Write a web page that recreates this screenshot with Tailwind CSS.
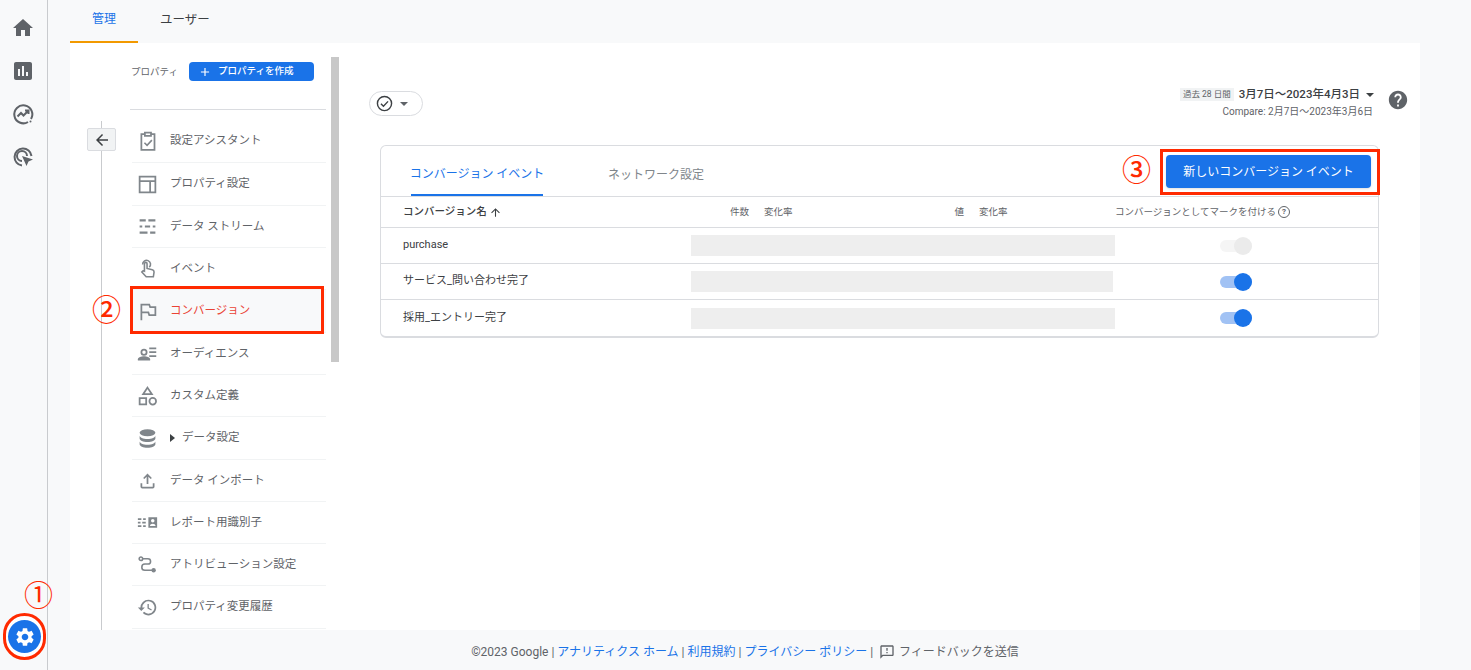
<!DOCTYPE html>
<html lang="ja">
<head>
  <meta charset="UTF-8">
  <title>管理 - コンバージョン</title>
  <script src="https://cdn.jsdelivr.net/npm/@tailwindcss/browser@4"></script>
</head>
<body class="bg-[#f8f9fa] font-['Roboto','Noto_Sans_CJK_JP',sans-serif] text-[#5f6368]">
<div class="relative flex h-[670px] w-[1471px] overflow-hidden">

  <!-- rail -->
  <div class="flex w-[48px] shrink-0 flex-col items-center border-r border-[#c9cbce] pr-px pt-[16px] text-[#5f6368]">
    <svg class="mb-[19px] h-[24px] w-[24px]" viewBox="0 0 24 24" fill="currentColor"><path d="M10 20v-6h4v6h5v-8h3L12 3 2 12h3v8z"/></svg>
    <svg class="mb-[19px] h-[24px] w-[24px]" viewBox="0 0 24 24" fill="currentColor"><path d="M19 3H5c-1.1 0-2 .9-2 2v14c0 1.1.9 2 2 2h14c1.1 0 2-.9 2-2V5c0-1.1-.9-2-2-2zM9 17H7v-7h2v7zm4 0h-2V7h2v10zm4 0h-2v-4h2v4z"/></svg>
    <svg class="mb-[19px] h-[24px] w-[24px]" viewBox="0 0 24 24" fill="none" stroke="currentColor" stroke-width="2"><path d="M20 17a9 9 0 1 0-3 3"/><path d="M6.5 14.5l3.5-3.5 2.5 2.5 4.5-4.5M14 8.500h3.500V12"/><circle cx="19.500" cy="19.500" r="1" fill="currentColor" stroke="none"/></svg>
    <svg class="h-[24px] w-[24px]" viewBox="0 0 24 24" fill="none" stroke="currentColor" stroke-width="2"><path d="M11 20.500a8.500 8.500 0 1 1 9.500-9.500"/><path d="M11 16a5 5 0 1 1 5-5"/><path d="M11 11l11 3.500-4.500 2 -2 4.500z" fill="currentColor" stroke="none"/></svg>
  </div>

  <!-- main -->
  <div class="flex min-w-0 flex-1 flex-col pl-[22px] pr-[51px]">
    <div class="flex h-[43px] shrink-0 text-[12px]">
      <div class="flex h-[43px] w-[68px] items-center justify-center border-b-2 border-[#f29900] pb-[3px] text-[#1a73e8]">管理</div>
      <div class="flex h-[43px] w-[94px] items-center justify-center pb-[3px] text-[12.500px] text-[#3c4043]">ユーザー</div>
    </div>

    <div class="flex min-h-0 flex-1 bg-white">
      <!-- side column -->
      <div class="flex w-[270px] shrink-0">
        <div class="relative w-[60px] shrink-0">
          <div class="absolute bottom-0 left-[31px] top-[78px] w-px bg-[#c9cbce]"></div>
          <div class="absolute left-[17px] top-[85px] flex h-[23px] w-[29px] items-center justify-center rounded-[2px] border border-[#dadce0] bg-[#f1f3f4] text-[#3c4043]">
            <svg class="h-[18px] w-[18px]" viewBox="0 0 24 24" fill="currentColor"><path d="M20 11H7.830l5.590-5.590L12 4l-8 8 8 8 1.410-1.410L7.830 13H20z"/></svg>
          </div>
        </div>
        <div class="w-[196px] shrink-0">
          <div class="flex h-[67px] items-start border-b border-[#dadce0] pl-[1px] pt-[19px]">
            <span class="mt-[3px] w-[58px] text-[9.500px] text-[#5f6368]">プロパティ</span>
            <div class="flex h-[19px] w-[125px] items-center rounded-[4px] bg-[#1a73e8] pl-[9px] text-[9.500px] font-medium text-white">
              <svg class="mr-[6px] h-[14px] w-[14px]" viewBox="0 0 24 24" fill="currentColor"><path d="M19 13h-6v6h-2v-6H5v-2h6V5h2v6h6z"/></svg>プロパティを作成
            </div>
          </div>
          <div class="pl-[2px] text-[11.500px] text-[#5f6368]">
            <div class="flex h-[53px] items-center border-b border-[#f1f3f4] pt-[9px]">
              <svg class="ml-[5px] mr-[12px] h-[22px] w-[21px] text-[#80868b]" viewBox="0 0 24 24" fill="none" stroke="currentColor" stroke-width="2"><path d="M9 4H5v18h15V4h-4M9 2.500h7V6H9z"/><path d="M8.500 14l3 3 5.500-6" stroke-width="1.800"/></svg>
              設定アシスタント
            </div>
            <div class="flex h-[43px] items-center border-b border-[#f1f3f4]">
              <svg class="ml-[5px] mr-[12px] h-[21px] w-[21px] text-[#80868b]" viewBox="0 0 24 24" fill="none" stroke="currentColor" stroke-width="2"><path d="M3 3h18v18H3zM3 8h18M15 8v13"/></svg>
              プロパティ設定
            </div>
            <div class="flex h-[42px] items-center border-b border-[#f1f3f4]">
              <svg class="ml-[5px] mr-[12px] h-[21px] w-[21px] text-[#80868b]" viewBox="0 0 24 24" fill="none" stroke="currentColor" stroke-width="2.400"><path d="M3 5h7M13 5h8M3 12h3M9 12h6M18 12h3M3 19h9M15 19h6"/></svg>
              データ ストリーム
            </div>
            <div class="flex h-[42px] items-center border-b border-[#f1f3f4]">
              <svg class="ml-[5px] mr-[12px] h-[21px] w-[21px] text-[#80868b]" viewBox="0 0 24 24" fill="none" stroke="currentColor" stroke-width="1.800"><path d="M6.500 7.500a4.500 4.500 0 1 1 7.500 3"/><path d="M8.500 15V6.500a1.500 1.500 0 0 1 3 0V12l6 1.500c1.500.4 2 1.500 2 2.500l-.8 5.500H10.500L5.500 16c1-1.200 2-1.500 3-1z"/></svg>
              イベント
            </div>
            <div class="flex h-[43px] items-center border-b border-[#f1f3f4] bg-[#f8f9fa] text-[#ea4335]">
              <svg class="ml-[5px] mr-[12px] h-[21px] w-[21px] text-[#80868b]" viewBox="0 0 24 24" fill="none" stroke="currentColor" stroke-width="2"><path d="M5 22V4h9l1 3h6v9h-7l-1-3H5"/></svg>
              コンバージョン
            </div>
            <div class="flex h-[42px] items-center border-b border-[#f1f3f4]">
              <svg class="ml-[5px] mr-[12px] h-[21px] w-[21px] text-[#80868b]" viewBox="0 0 24 24" fill="currentColor"><path d="M14 5h8v2h-8zM14 9.500h8v2h-8zM14 14h8v2h-8z"/><circle cx="8" cy="10.500" r="3" fill="none" stroke="currentColor" stroke-width="2"/><path d="M1 20v-1.500C1 16 5 15 8 15s7 1 7 3.500V20z"/></svg>
              オーディエンス
            </div>
            <div class="flex h-[42px] items-center border-b border-[#f1f3f4]">
              <svg class="ml-[5px] mr-[12px] h-[21px] w-[21px] text-[#80868b]" viewBox="0 0 24 24" fill="none" stroke="currentColor" stroke-width="2"><path d="M12 3l5 7.500H7zM3 15h7.500v7H3z"/><circle cx="18" cy="18.500" r="3.800"/></svg>
              カスタム定義
            </div>
            <div class="flex h-[43px] items-center border-b border-[#f1f3f4]">
              <svg class="ml-[5px] mr-[12px] h-[21px] w-[21px] text-[#80868b]" viewBox="0 0 24 24" fill="currentColor"><ellipse cx="12" cy="5.500" rx="9" ry="4"/><path d="M3 8.500c0 2.200 4 4 9 4s9-1.800 9-4V12c0 2.200-4 4-9 4s-9-1.800-9-4zM3 15c0 2.200 4 4 9 4s9-1.800 9-4v3.500c0 2.200-4 4-9 4s-9-1.800-9-4z"/></svg>
              <span class="mr-[7px] h-0 w-0 border-y-[4px] border-l-[5px] border-y-transparent border-l-[#3c4043]"></span>データ設定
            </div>
            <div class="flex h-[42px] items-center border-b border-[#f1f3f4]">
              <svg class="ml-[5px] mr-[12px] h-[21px] w-[21px] text-[#80868b]" viewBox="0 0 24 24" fill="currentColor"><path d="M11 16V7.800L8.400 10.400 7 9l5-5 5 5-1.400 1.400L13 7.800V16zM4 15h2v4h12v-4h2v4a2 2 0 0 1-2 2H6a2 2 0 0 1-2-2z"/></svg>
              データ インポート
            </div>
            <div class="flex h-[42px] items-center border-b border-[#f1f3f4]">
              <svg class="ml-[5px] mr-[12px] h-[21px] w-[21px] text-[#80868b]" viewBox="0 0 24 24" fill="currentColor"><path d="M1 7h4v2H1zM7 7h3v2H7zM1 11h3v2H1zM6 11h4v2H6zM1 15h4v2H1zM7 15h3v2H7z"/><path fill-rule="evenodd" d="M13 6h10v12H13zM18 8a2 2 0 1 0 0 4 2 2 0 0 0 0-4zm-3.200 8h6.400c0-1.500-1.800-2.500-3.200-2.500s-3.200 1-3.200 2.500z"/></svg>
              レポート用識別子
            </div>
            <div class="flex h-[42px] items-center border-b border-[#f1f3f4]">
              <svg class="ml-[5px] mr-[12px] h-[21px] w-[21px] text-[#80868b]" viewBox="0 0 24 24" fill="none" stroke="currentColor" stroke-width="1.800"><circle cx="4.500" cy="5.500" r="2"/><path d="M6.500 5.500h6a3 3 0 0 1 0 6H9a3 3 0 0 0 0 7h9"/><circle cx="19" cy="18.500" r="2.500" fill="currentColor" stroke="none"/></svg>
              アトリビューション設定
            </div>
            <div class="flex h-[43px] items-center border-b border-[#f1f3f4]">
              <svg class="ml-[5px] mr-[12px] h-[21px] w-[21px] text-[#80868b]" viewBox="0 0 24 24" fill="currentColor"><path d="M13 3a9 9 0 0 0-9 9H1l3.900 3.900L9 12H6a7 7 0 1 1 2.050 4.950L6.640 18.360A9 9 0 1 0 13 3zm-1 5v5l4.300 2.500.7-1.200-3.500-2.100V8z"/></svg>
              プロパティ変更履歴
            </div>
          </div>
        </div>
        <div class="ml-[5px] mt-[14px] h-[305px] w-[8px] shrink-0 bg-[#c8c8c8]"></div>
      </div>

      <!-- content -->
      <div class="min-w-0 flex-1 pl-[40px] pr-[41px]">
        <div class="flex h-[102px] items-start justify-between pl-[-11px]">
          <div class="-ml-[11px] mt-[48px] flex h-[25px] w-[54px] items-center rounded-full border border-[#dadce0] pl-[6px]">
            <svg class="h-[17px] w-[17px] text-[#3c4043]" viewBox="0 0 24 24" fill="none" stroke="currentColor" stroke-width="2"><circle cx="12" cy="12" r="10"/><path d="M7 12.500l3.500 3.500 6.500-7"/></svg>
            <span class="ml-[7px] h-0 w-0 border-x-[4px] border-t-[4px] border-x-transparent border-t-[#5f6368]"></span>
          </div>
          <div class="mr-[-30px] mt-[44px] flex items-start">
            <div class="flex flex-col items-end">
              <div class="flex h-[15px] items-center">
                <span class="mr-[5px] bg-[#f1f3f4] px-[3px] text-[8.500px] leading-[13px] text-[#5f6368]">過去 28 日間</span>
                <span class="text-[11.500px] font-medium text-[#3c4043]">3月7日〜2023年4月3日</span>
                <span class="ml-[6px] mr-[-1px] h-0 w-0 border-x-[4px] border-t-[4px] border-x-transparent border-t-[#3c4043]"></span>
              </div>
              <div class="mr-0 mt-[3px] text-[10px] leading-[14px] text-[#5f6368]">Compare: 2月7日〜2023年3月6日</div>
            </div>
            <svg class="ml-[14px] mt-[2px] h-[22px] w-[22px] text-[#5f6368]" viewBox="0 0 24 24" fill="currentColor"><path d="M12 2C6.480 2 2 6.480 2 12s4.480 10 10 10 10-4.480 10-10S17.520 2 12 2zm1 17h-2v-2h2v2zm2.070-7.750l-.9.920C13.450 12.900 13 13.500 13 15h-2v-.5c0-1.100.45-2.100 1.170-2.830l1.240-1.260c.37-.36.590-.86.590-1.410 0-1.100-.9-2-2-2s-2 .9-2 2H8c0-2.210 1.790-4 4-4s4 1.790 4 4c0 .88-.36 1.680-.93 2.250z"/></svg>
          </div>
        </div>

        <div class="w-[999px] overflow-hidden rounded-[6px] border border-[#dadce0] border-b-2 text-[11px]">
          <div class="flex h-[51px] items-end border-b border-[#dadce0]">
            <div class="ml-[30px] flex h-[51px] w-[132px] items-center justify-center border-b-2 border-[#1a73e8] pt-[9px] text-[12px] text-[#1a73e8]"><span class="whitespace-nowrap">コンバージョン イベント</span></div>
            <div class="ml-[65px] flex h-[51px] items-center pt-[9px] text-[12px] text-[#80868b]">ネットワーク設定</div>
          </div>
          <div class="flex h-[31px] items-center border-b border-[#dadce0] text-[9.500px] text-[#5f6368]">
            <div class="flex w-[345px] items-center pl-[22px] text-[10.500px] font-medium text-[#3c4043]">コンバージョン名<svg class="ml-[2px] h-[13px] w-[13px]" viewBox="0 0 24 24" fill="currentColor"><path d="M4 12l1.410 1.410L11 7.830V20h2V7.830l5.580 5.590L20 12l-8-8z"/></svg></div>
            <div class="ml-[1px] w-[22px] text-right">件数</div>
            <div class="ml-[15px] w-[32px]">変化率</div>
            <div class="ml-[158px] w-[10px] text-right">値</div>
            <div class="ml-[15px] w-[33px]">変化率</div>
            <div class="ml-[103px] flex items-center">コンバージョンとしてマークを付ける<span class="ml-[2px] flex h-[12px] w-[12px] items-center justify-center rounded-full border border-[#5f6368] text-[8px] font-bold">?</span></div>
          </div>
          <div class="flex h-[36px] items-center border-b border-[#dadce0] text-[#3c4043]">
            <div class="w-[310px] pl-[22px]">purchase</div>
            <div class="h-[21px] w-[424px] bg-[#eeeeee]"></div>
            <div class="relative ml-[105px] h-[12px] w-[32px] rounded-full bg-[#f5f5f5]"><div class="absolute -top-[3px] right-0 h-[18px] w-[18px] rounded-full bg-[#ebebeb]"></div></div>
          </div>
          <div class="flex h-[36px] items-center border-b border-[#dadce0] text-[#3c4043]">
            <div class="w-[310px] pl-[22px]">サービス_問い合わせ完了</div>
            <div class="h-[21px] w-[422px] bg-[#eeeeee]"></div>
            <div class="relative ml-[107px] h-[12px] w-[32px] rounded-full bg-[#a1c2f4]"><div class="absolute -top-[3px] right-0 h-[18px] w-[18px] rounded-full bg-[#1a73e8]"></div></div>
          </div>
          <div class="flex h-[36px] items-center text-[#3c4043]">
            <div class="w-[310px] pl-[22px]">採用_エントリー完了</div>
            <div class="h-[21px] w-[424px] bg-[#eeeeee]"></div>
            <div class="relative ml-[105px] h-[12px] w-[32px] rounded-full bg-[#a1c2f4]"><div class="absolute -top-[3px] right-0 h-[18px] w-[18px] rounded-full bg-[#1a73e8]"></div></div>
          </div>
        </div>
      </div>
    </div>

    <div class="flex h-[40px] shrink-0 items-center justify-center pr-[0px] pt-[4px] text-[12px] text-[#5f6368]">
      <span>©2023 Google | <span class="text-[#1a73e8]">アナリティクス ホーム</span> | <span class="text-[#1a73e8]">利用規約</span> | <span class="text-[#1a73e8]">プライバシー ポリシー</span> |</span>
      <svg class="ml-[6px] mr-[4px] h-[16px] w-[16px]" viewBox="0 0 24 24" fill="currentColor"><path d="M20 2H4c-1.100 0-2 .9-2 2v18l4-4h14c1.100 0 2-.9 2-2V4c0-1.100-.9-2-2-2zm0 14H5.170L4 17.170V4h16v12zM11 12h2v2h-2zm0-6h2v4h-2z"/></svg>
      <span>フィードバックを送信</span>
    </div>
  </div>

  <!-- annotations on top of the screenshot -->
  <div class="absolute left-[3px] top-[613px] flex h-[47px] w-[43px] items-center justify-center rounded-full border-[3px] border-[#ff2a00] bg-white">
    <div class="flex h-[33px] w-[33px] items-center justify-center rounded-full bg-[#1a73e8]">
      <svg class="h-[22px] w-[22px] text-white" viewBox="0 0 24 24" fill="currentColor"><path d="M19.140 12.940c.04-.3.06-.61.06-.94 0-.32-.02-.64-.07-.94l2.030-1.580c.18-.14.23-.41.12-.61l-1.920-3.320c-.12-.22-.37-.29-.59-.22l-2.390.96c-.5-.38-1.030-.7-1.620-.94l-.36-2.540c-.04-.24-.24-.41-.48-.41h-3.840c-.24 0-.43.17-.47.41l-.36 2.540c-.59.24-1.130.57-1.620.94l-2.390-.96c-.22-.08-.47 0-.59.22L2.740 8.870c-.12.21-.08.47.12.61l2.030 1.580c-.05.3-.09.63-.09.94s.02.64.07.94l-2.030 1.580c-.18.14-.23.41-.12.61l1.920 3.320c.12.22.37.29.59.22l2.390-.96c.5.38 1.030.7 1.620.94l.36 2.540c.05.24.24.41.48.41h3.840c.24 0 .44-.17.47-.41l.36-2.540c.59-.24 1.130-.56 1.620-.94l2.390.96c.22.08.47 0 .59-.22l1.920-3.320c.12-.22.07-.47-.12-.61l-2.010-1.580zM12 15.600c-1.980 0-3.600-1.620-3.600-3.600s1.620-3.600 3.600-3.600 3.600 1.620 3.600 3.600-1.620 3.600-3.600 3.600z"/></svg>
    </div>
  </div>
  <div class="absolute left-[24px] top-[580px] text-[29px] leading-[32px] text-[#ff2a00]">①</div>
  <div class="absolute left-[92px] top-[295px] text-[29px] font-medium leading-[32px] text-[#ff2a00]">②</div>
  <div class="absolute left-[1122px] top-[155px] text-[29px] font-medium leading-[32px] text-[#ff2a00]">③</div>
  <div class="absolute left-[130px] top-[286px] h-[48px] w-[194px] border-[3px] border-[#ff2a00]"></div>
  <div class="absolute left-[1160px] top-[149px] h-[46px] w-[220px] border-[3px] border-[#ff2a00]"></div>
  <div class="absolute left-[1166px] top-[155px] flex h-[33px] w-[205px] items-center justify-center rounded-[4px] bg-[#1a73e8] text-[12px] text-white shadow-sm">新しいコンバージョン イベント</div>
</div>
</body>
</html>
